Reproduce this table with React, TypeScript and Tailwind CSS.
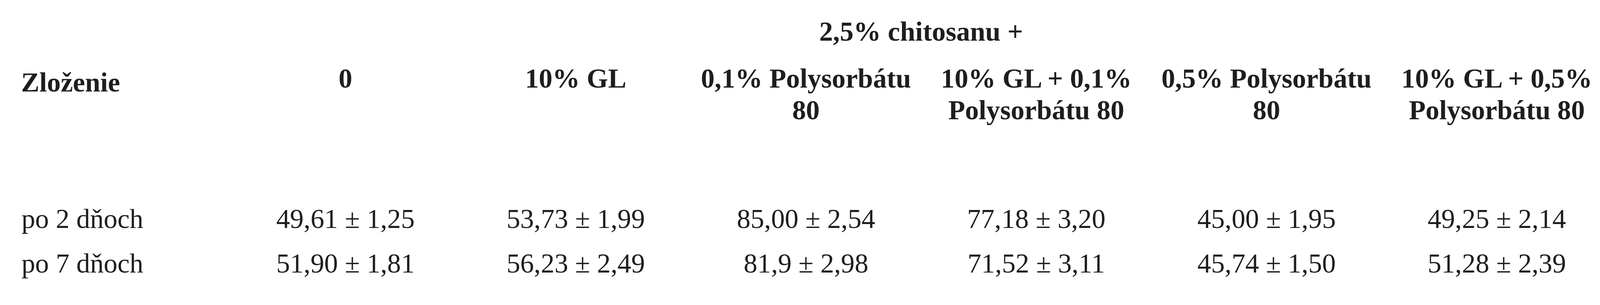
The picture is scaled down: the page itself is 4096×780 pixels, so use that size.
import React from "react";

const headers: React.ReactNode[] = [
  "0",
  "10% GL",
  <>0,1% Polysorbátu<br />80</>,
  <>10% GL + 0,1%<br />Polysorbátu 80</>,
  <>0,5% Polysorbátu<br />80</>,
  <>10% GL + 0,5%<br />Polysorbátu 80</>,
];

const rows: { label: string; values: string[] }[] = [
  {
    label: "po 2 dňoch",
    values: ["49,61 ± 1,25", "53,73 ± 1,99", "85,00 ± 2,54", "77,18 ± 3,20", "45,00 ± 1,95", "49,25 ± 2,14"],
  },
  {
    label: "po 7 dňoch",
    values: ["51,90 ± 1,81", "56,23 ± 2,49", "81,9 ± 2,98", "71,52 ± 3,11", "45,74 ± 1,50", "51,28 ± 2,39"],
  },
];

export default function App() {
  return (
    <div className="w-[4096px] h-[780px] overflow-hidden bg-white text-[#1e1e1e] font-['Liberation_Serif','Times_New_Roman',serif] text-[70.2px]">
      <div className="grid grid-cols-[589.6px_repeat(6,589.5px)] w-[4126.6px]">
        {/* group header */}
        <div />
        <div className="col-span-6 text-center font-bold leading-[80.9px] pt-[40px]">
          2,5% chitosanu +
        </div>

        {/* column headers */}
        <div className="mt-[39px] pt-[9.75px] pl-[54px] font-bold leading-[80.9px] whitespace-nowrap">
          Zloženie
        </div>
        {headers.map((h, i) => (
          <div key={i} className="mt-[39px] text-center font-bold leading-[80.9px] whitespace-nowrap">
            {h}
          </div>
        ))}

        {/* data rows */}
        {rows.map((r, ri) => (
          <React.Fragment key={ri}>
            <div className={`pl-[55px] leading-[114px] whitespace-nowrap ${ri === 0 ? "mt-[180.4px]" : ""}`}>
              {r.label}
            </div>
            {r.values.map((v, vi) => (
              <div
                key={vi}
                className={`text-center leading-[114px] whitespace-nowrap ${ri === 0 ? "mt-[180.4px]" : ""}`}
              >
                {v}
              </div>
            ))}
          </React.Fragment>
        ))}
      </div>
    </div>
  );
}
